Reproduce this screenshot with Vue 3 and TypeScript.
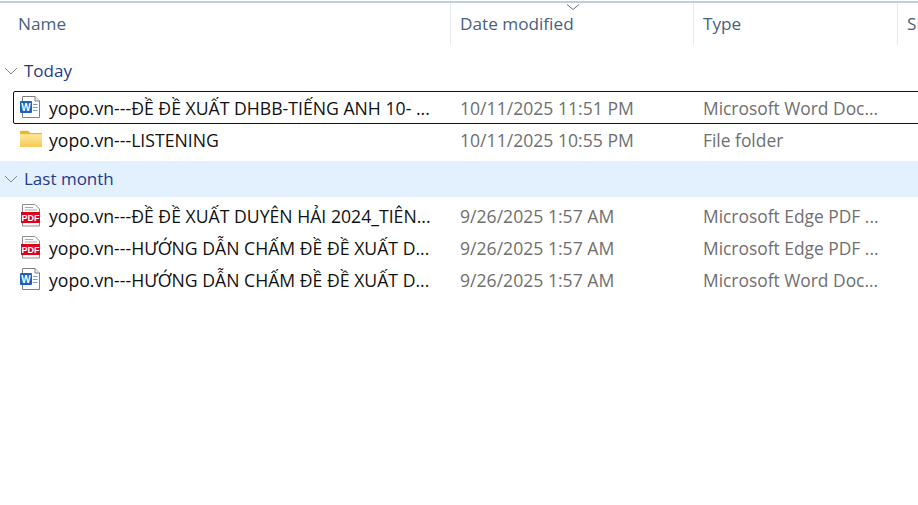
<template>
  <div class="explorer">
    <div class="header">
      <div class="col-head name-head">Name</div>
      <div class="col-head date-head">
        <svg class="sort" width="14" height="6" viewBox="0 0 14 6"><path d="M1 0.5 7 5.5 13 0.5" /></svg>
        Date modified
      </div>
      <div class="col-head">Type</div>
      <div class="col-head">Si</div>
    </div>

    <section v-for="group in groups" :key="group.title" class="group">
      <div :class="['group-title', { 'is-hover': group.hover }]">
        <svg class="chevron" width="14" height="8" viewBox="0 0 14 8"><path d="M1 1 7 7 13 1" /></svg>
        <span>{{ group.title }}</span>
      </div>
      <div class="rows">
        <div v-for="file in group.files" :key="file.name + file.type" :class="['row', { 'is-focus': file.focus }]">
          <div class="cell name">
            <svg v-if="file.icon === 'word'" class="icon" width="23" height="24" viewBox="0 0 23 24">
              <path d="M3.5 0.5H16L20.5 5V21.5H3.5Z" fill="#fff" stroke="#7f7f7f" />
              <path d="M16 0.5V5H20.5" fill="#f2f2f2" stroke="#7f7f7f" />
              <path d="M14 8.5H18.5M14 11.5H18.5M14 14.5H18.5" stroke="#6f9bd6" />
              <rect x="1" y="5" width="12" height="12" rx="1" fill="#1f5fbf" />
              <text x="7" y="14.8" class="badge-w">W</text>
            </svg>
            <svg v-else-if="file.icon === 'pdf'" class="icon" width="23" height="24" viewBox="0 0 23 24">
              <path d="M3.5 0.5H16L20.5 5V22H3.5Z" fill="#fff" stroke="#8c8c8c" />
              <path d="M6 3.5H14M6 6H18" stroke="#a8a8a8" />
              <rect x="2" y="8" width="19" height="11" fill="#e0001b" />
              <text x="11.5" y="17" class="badge-pdf">PDF</text>
            </svg>
            <svg v-else class="icon" width="23" height="24" viewBox="0 0 23 24">
              <defs>
                <linearGradient id="folderFill" x1="0" y1="0" x2="0" y2="1">
                  <stop offset="0" stop-color="#fdeaa0" />
                  <stop offset="1" stop-color="#f8c853" />
                </linearGradient>
              </defs>
              <path d="M1 18.7V4Q1 2.7 2.3 2.7H9L11.5 5H23V18.7Z" fill="#eeb62c" />
              <path d="M1 18.7V6.2H23V18.7Z" fill="url(#folderFill)" />
            </svg>
            <span class="file-name">{{ file.name }}</span>
          </div>
          <div class="cell date">{{ file.date }}</div>
          <div class="cell type">{{ file.type }}</div>
          <div class="cell"></div>
        </div>
      </div>
    </section>
  </div>
</template>

<script setup lang="ts">
interface FileRow {
  name: string
  date: string
  type: string
  icon: 'word' | 'pdf' | 'folder'
  focus?: boolean
}

interface FileGroup {
  title: string
  hover?: boolean
  files: FileRow[]
}

const groups: FileGroup[] = [
  {
    title: 'Today',
    files: [
      {
        name: 'yopo.vn---ĐỀ ĐỀ XUẤT DHBB-TIẾNG ANH 10- ...',
        date: '10/11/2025 11:51 PM',
        type: 'Microsoft Word Doc...',
        icon: 'word',
        focus: true
      },
      { name: 'yopo.vn---LISTENING', date: '10/11/2025 10:55 PM', type: 'File folder', icon: 'folder' }
    ]
  },
  {
    title: 'Last month',
    hover: true,
    files: [
      {
        name: 'yopo.vn---ĐỀ ĐỀ XUẤT DUYÊN HẢI 2024_TIÊN...',
        date: '9/26/2025 1:57 AM',
        type: 'Microsoft Edge PDF ...',
        icon: 'pdf'
      },
      {
        name: 'yopo.vn---HƯỚNG DẪN CHẤM ĐỀ ĐỀ XUẤT D...',
        date: '9/26/2025 1:57 AM',
        type: 'Microsoft Edge PDF ...',
        icon: 'pdf'
      },
      {
        name: 'yopo.vn---HƯỚNG DẪN CHẤM ĐỀ ĐỀ XUẤT D...',
        date: '9/26/2025 1:57 AM',
        type: 'Microsoft Word Doc...',
        icon: 'word'
      }
    ]
  }
]
</script>

<style scoped>
.explorer {
  width: 918px;
  height: 505px;
  overflow: hidden;
  background: #fff;
  font-family: "Open Sans", "Noto Sans", sans-serif;
  font-size: 17px;
  color: #111;
}

.header {
  display: grid;
  grid-template-columns: 450px 243px 204px 1fr;
  height: 44px;
  border-top: 2px solid #bccfe0;
  margin-top: 1px;
  box-sizing: border-box;
}

.col-head {
  position: relative;
  padding-left: 9px;
  line-height: 41px;
  font-size: 17.2px;
  color: #4a5f7c;
  border-left: 1px solid #e6eaf0;
}

.name-head {
  padding-left: 18px;
  border-left: 0;
}

.sort {
  position: absolute;
  left: 115px;
  top: 1px;
  fill: none;
  stroke: #6d7278;
}

.group {
  margin-top: 8px;
}

.group + .group {
  margin-top: 5px;
}

.group-title {
  display: flex;
  align-items: center;
  gap: 6px;
  height: 36px;
  padding-left: 4px;
  color: #27398c;
}

.group-title span {
  padding-bottom: 2px;
}

.group-title.is-hover {
  background: #e3f1fe;
}

.chevron {
  fill: none;
  stroke: #7d8890;
}

.rows {
  margin-top: 3px;
}

.row {
  display: grid;
  grid-template-columns: 450px 243px 204px 1fr;
  height: 32px;
  align-items: center;
  position: relative;
}

.row.is-focus::before {
  content: "";
  position: absolute;
  left: 13px;
  right: -8px;
  top: -1px;
  bottom: 0;
  border: 1px solid #111;
  border-radius: 2px;
}

.cell {
  padding-left: 10px;
  white-space: nowrap;
  overflow: hidden;
}

.name {
  display: flex;
  align-items: center;
  gap: 7px;
  padding-left: 19px;
}

.icon {
  flex: none;
}

.file-name {
  font-size: 17.65px;
}

.date {
  color: #6f6f6f;
  font-size: 17.6px;
}

.type {
  color: #6f6f6f;
  font-size: 17.4px;
}

.badge-w {
  font-family: "Liberation Sans", sans-serif;
  font-size: 10px;
  font-weight: 700;
  fill: #fff;
  text-anchor: middle;
}

.badge-pdf {
  font-family: "Liberation Sans", sans-serif;
  font-size: 9px;
  font-weight: 700;
  fill: #fff;
  text-anchor: middle;
}
</style>
